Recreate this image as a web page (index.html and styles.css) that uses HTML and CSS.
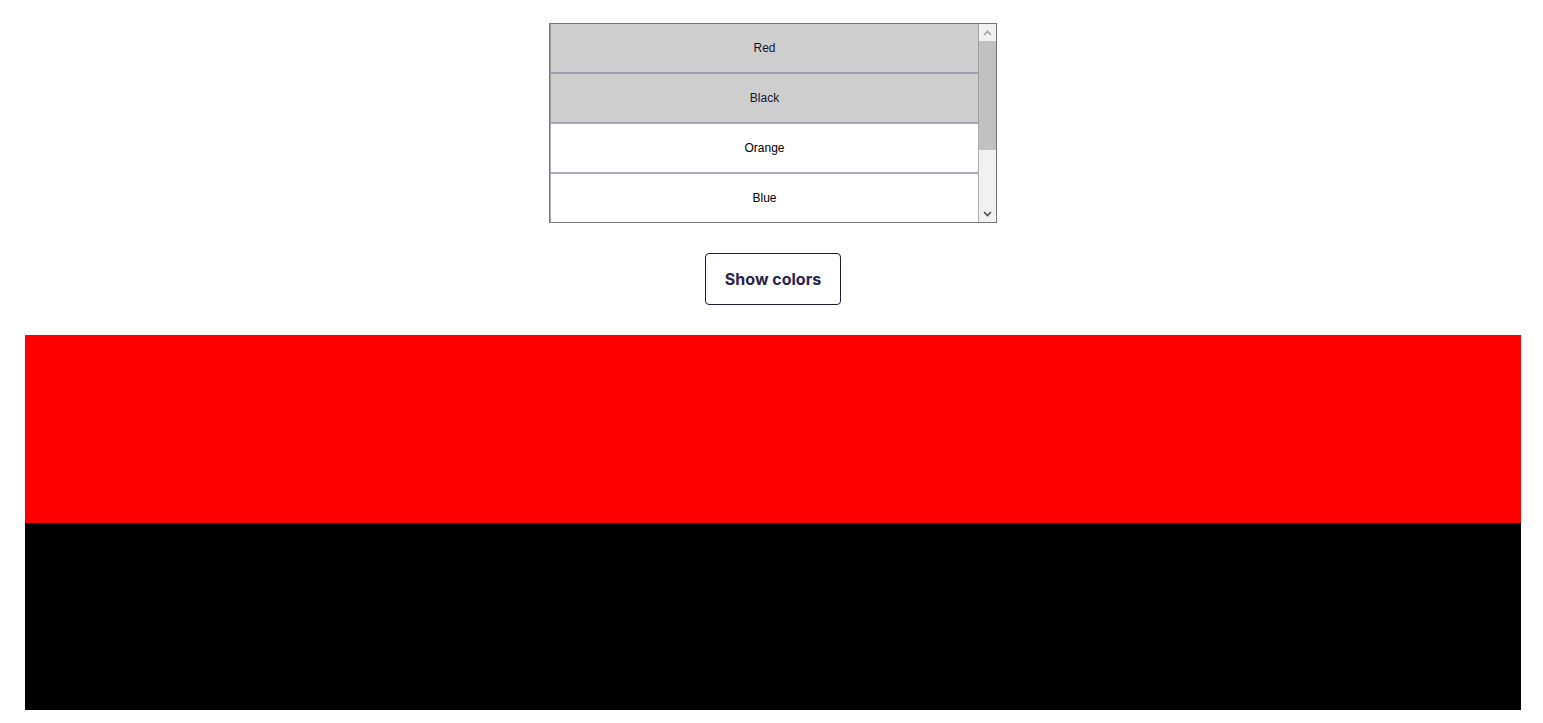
FILE: index.html
```html
<!DOCTYPE html>
<html lang="en">
<head>
<meta charset="utf-8">
<title>Colors</title>
<link rel="stylesheet" href="styles.css">
</head>
<body>
<main class="page">
  <div class="listbox" role="listbox" aria-multiselectable="true">
    <div class="options">
      <div class="option selected" role="option">Red</div>
      <div class="option selected" role="option">Black</div>
      <div class="option" role="option">Orange</div>
      <div class="option" role="option">Blue</div>
    </div>
    <div class="scrollbar">
      <div class="arrow">
        <svg width="9" height="6" viewBox="0 0 9 6"><path d="M1 5 L4.5 1.5 L8 5" fill="none" stroke="#a3a3a3" stroke-width="1.6"/></svg>
      </div>
      <div class="track">
        <div class="thumb"></div>
      </div>
      <div class="arrow">
        <svg width="9" height="6" viewBox="0 0 9 6"><path d="M1 1 L4.5 4.5 L8 1" fill="none" stroke="#505050" stroke-width="1.6"/></svg>
      </div>
    </div>
  </div>
  <button class="show-btn" type="button">Show colors</button>
  <section class="swatches">
    <div class="swatch red"></div>
    <div class="swatch black"></div>
  </section>
</main>
</body>
</html>
```

FILE: styles.css
```css
html, body {
  margin: 0;
  padding: 0;
  background: #ffffff;
}

.page {
  display: flex;
  flex-direction: column;
  align-items: center;
  padding-top: 23px;
  font-family: "Liberation Sans", Arial, sans-serif;
}

.listbox {
  display: flex;
  width: 448px;
  height: 200px;
  box-sizing: border-box;
  border: 1px solid #767676;
  margin-left: 3px;
  overflow: hidden;
}

.options {
  flex: 1;
  display: flex;
  flex-direction: column;
  margin-top: -1px;
}

.option {
  flex: 0 0 auto;
  height: 50px;
  box-sizing: border-box;
  border: 1px solid #aeaabc;
  display: flex;
  align-items: center;
  justify-content: center;
  font-size: 12px;
  color: #000000;
  background: #ffffff;
}

.option.selected {
  background: #cecece;
  border-color: #a19fae;
  color: #151530;
}

.scrollbar {
  width: 17px;
  flex: 0 0 17px;
  display: flex;
  flex-direction: column;
  background: #f1f1f1;
}

.arrow {
  height: 17px;
  flex: 0 0 17px;
  display: flex;
  align-items: center;
  justify-content: center;
}

.track {
  flex: 1;
  display: flex;
  flex-direction: column;
}

.thumb {
  height: 109px;
  background: #c1c1c1;
}

.show-btn {
  margin-top: 30px;
  margin-left: 3px;
  width: 136px;
  height: 52px;
  box-sizing: border-box;
  border: 1px solid #1d1c3a;
  border-radius: 4px;
  background: #ffffff;
  font-family: Inter, "Liberation Sans", sans-serif;
  font-weight: 700;
  font-size: 16px;
  color: #26254d;
  padding: 0;
  cursor: pointer;
}

.swatches {
  margin-top: 30px;
  align-self: stretch;
  margin-left: 25px;
  margin-right: 22px;
  display: flex;
  flex-direction: column;
}

.swatch {
  height: 187.5px;
}

.swatch.red {
  background: #ff0000;
}

.swatch.black {
  background: #000000;
}
```
